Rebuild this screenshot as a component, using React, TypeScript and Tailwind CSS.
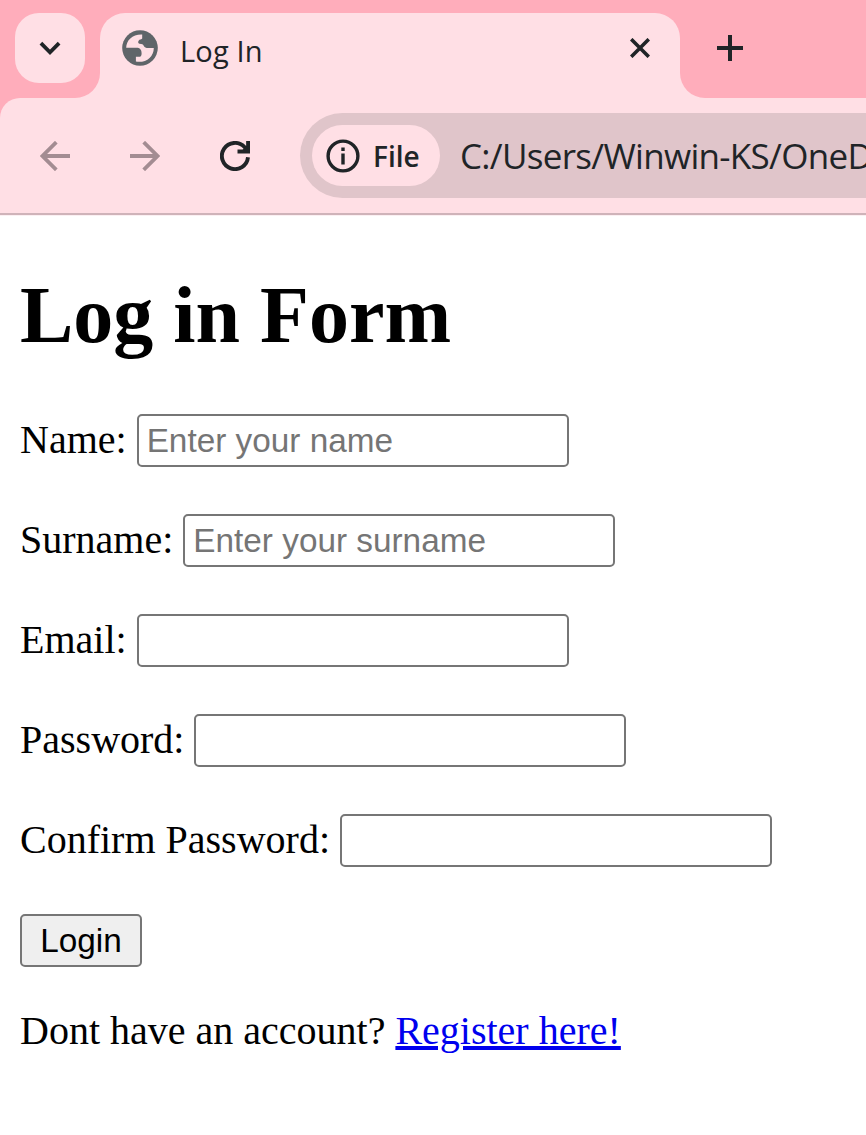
const tabFont = "font-['Open_Sans','Noto_Sans',sans-serif]";

function Globe() {
  return (
    <svg viewBox="0 0 36 36" className="size-9 shrink-0">
      <circle cx="18" cy="18" r="17.8" fill="#5f6569" />
      <path
        d="M4.2 17.8C4.2 10 10.6 4 20.2 4.4V8.6C19 9.8 17.6 9.3 16.8 10.5C15.8 12 16 13.4 17.4 13.7C20 13.8 21.2 14.4 22 16.2C22.6 17.6 24 17.9 26 17.9H31.8C31.8 26.8 24 33.2 13.9 31.6V26.8H17C18.8 26.8 19.6 25.6 19.6 23.4C19.6 19.6 18 17.8 14.4 17.8Z"
        fill="#ffdfe5"
      />
    </svg>
  );
}

function TabStrip() {
  return (
    <div>
      <div className="h-[13px] bg-[#ffadbb]" />
      <div className="flex h-[85px]">
        <div className="w-[100px] shrink-0 rounded-br-[25px] bg-[#ffadbb] pl-[15px]">
          <button className="flex size-[70px] items-center justify-center rounded-[24px] bg-[#ffdfe5]">
            <svg viewBox="0 0 24 16" className="h-4 w-6" fill="none" stroke="#202427" strokeWidth="3.8">
              <path d="M2.9 3.2L12 12.3L21.1 3.2" />
            </svg>
          </button>
        </div>
        <div className="w-[580px] shrink-0 bg-[#ffadbb]">
          <div className="flex h-full items-start rounded-t-[25px] bg-[#ffdfe5] pt-[17px] pr-[30px] pl-[22px]">
            <Globe />
            <span className={`${tabFont} mt-px ml-[22px] text-[29px] leading-[40px] tracking-[0.15px] text-[#202427]`}>
              Log In
            </span>
            <svg viewBox="0 0 20 20" className="mt-2 ml-auto size-5" stroke="#202427" strokeWidth="3.6">
              <path d="M1.2 1.2L18.8 18.8M18.8 1.2L1.2 18.8" />
            </svg>
          </div>
        </div>
        <div className="flex-1 rounded-bl-[25px] bg-[#ffadbb] pt-[22px] pl-[37px]">
          <svg viewBox="0 0 26 26" className="size-[26px]" stroke="#202427" strokeWidth="4">
            <path d="M0 13H26M13 0V26" />
          </svg>
        </div>
      </div>
    </div>
  );
}

function Toolbar() {
  return (
    <div className="bg-[#ffadbb]">
      <div className="flex h-[117px] items-start rounded-tl-[20px] border-b-2 border-[#cfb3b9] bg-[#ffdfe5] pt-[15px] pl-10">
        <svg viewBox="0 0 30 30" className="mt-7 size-[30px] shrink-0" fill="none" stroke="#a38c92" strokeWidth="3.8">
          <path d="M30 15H3M16.3 1.2L2.5 15L16.3 28.8" />
        </svg>
        <svg viewBox="0 0 30 30" className="mt-7 ml-[60px] size-[30px] shrink-0" fill="none" stroke="#a38c92" strokeWidth="3.8">
          <path d="M0 15H27M13.7 1.2L27.5 15L13.7 28.8" />
        </svg>
        <svg viewBox="0 0 30 30" className="mt-7 ml-[60px] size-[30px] shrink-0" fill="none" stroke="#202427" strokeWidth="3.9">
          <path d="M28 16.3A13.1 13.1 0 1 1 24.5 6L27 9M28.1 0V10.5H17.5" />
          <path d="M29 2.5V11H20.5Z" fill="#202427" stroke="none" />
        </svg>
        <div className="ml-[50px] flex h-[85px] flex-1 items-start overflow-hidden rounded-l-full bg-[#e0c5ca] pt-3 pl-3">
          <div className="flex h-[61px] w-32 shrink-0 items-center rounded-full bg-[#ffdfe5] pl-[14px]">
            <svg viewBox="0 0 34 34" className="size-[34px]" fill="none" stroke="#202427" strokeWidth="3.4">
              <circle cx="17" cy="17" r="14.9" />
              <path d="M17 14.6V25.4M17 8.4V12" />
            </svg>
            <span className={`${tabFont} ml-[13px] text-[28px] leading-none font-semibold text-[#202427]`}>
              File
            </span>
          </div>
          <span
            className={`${tabFont} ml-5 text-[35px] leading-[62px] tracking-[-0.7px] whitespace-nowrap text-[#202427]`}
          >
            C:/Users/Winwin-KS/OneD
          </span>
        </div>
      </div>
      <div className="h-px bg-[#fbf0f2]" />
    </div>
  );
}

const fields = [
  { label: "Name:", type: "text", placeholder: "Enter your name" },
  { label: "Surname:", type: "text", placeholder: "Enter your surname" },
  { label: "Email:", type: "email", placeholder: "" },
  { label: "Password:", type: "password", placeholder: "" },
  { label: "Confirm Password:", type: "password", placeholder: "" },
];

export default function App() {
  return (
    <div className="h-[1135px] w-[866px] overflow-hidden bg-white">
      <div className="bg-[#ffdfe5]">
        <TabStrip />
        <Toolbar />
      </div>
      <main className="px-5 pt-[53px] font-['Liberation_Serif','Times_New_Roman',serif] text-[40px] leading-[46px] text-black">
        <h1 className="text-[80px] leading-[92px] font-bold">Log in Form</h1>
        <form className="mt-[53px] flex flex-col items-start gap-[47px]">
          {fields.map((field) => (
            <label key={field.label} className="flex h-[53px] items-center gap-[10px]">
              <span className="mb-px whitespace-nowrap">{field.label}</span>
              <input
                type={field.type}
                placeholder={field.placeholder}
                className="h-[53px] w-[432px] rounded-[5px] border-2 border-[#767676] bg-white px-2 font-['Liberation_Sans',Arial,sans-serif] text-[33.33px] leading-none placeholder:text-[#757575]"
              />
            </label>
          ))}
          <button
            type="button"
            className="h-[53px] w-[122px] rounded-[5px] border-2 border-[#767676] bg-[#efefef] font-['Liberation_Sans',Arial,sans-serif] text-[33.33px] leading-none"
          >
            Login
          </button>
        </form>
        <p className="mt-[41px]">
          Dont have an account?{" "}
          <a href="#" className="text-[#0000ee] underline">
            Register here!
          </a>
        </p>
      </main>
    </div>
  );
}
